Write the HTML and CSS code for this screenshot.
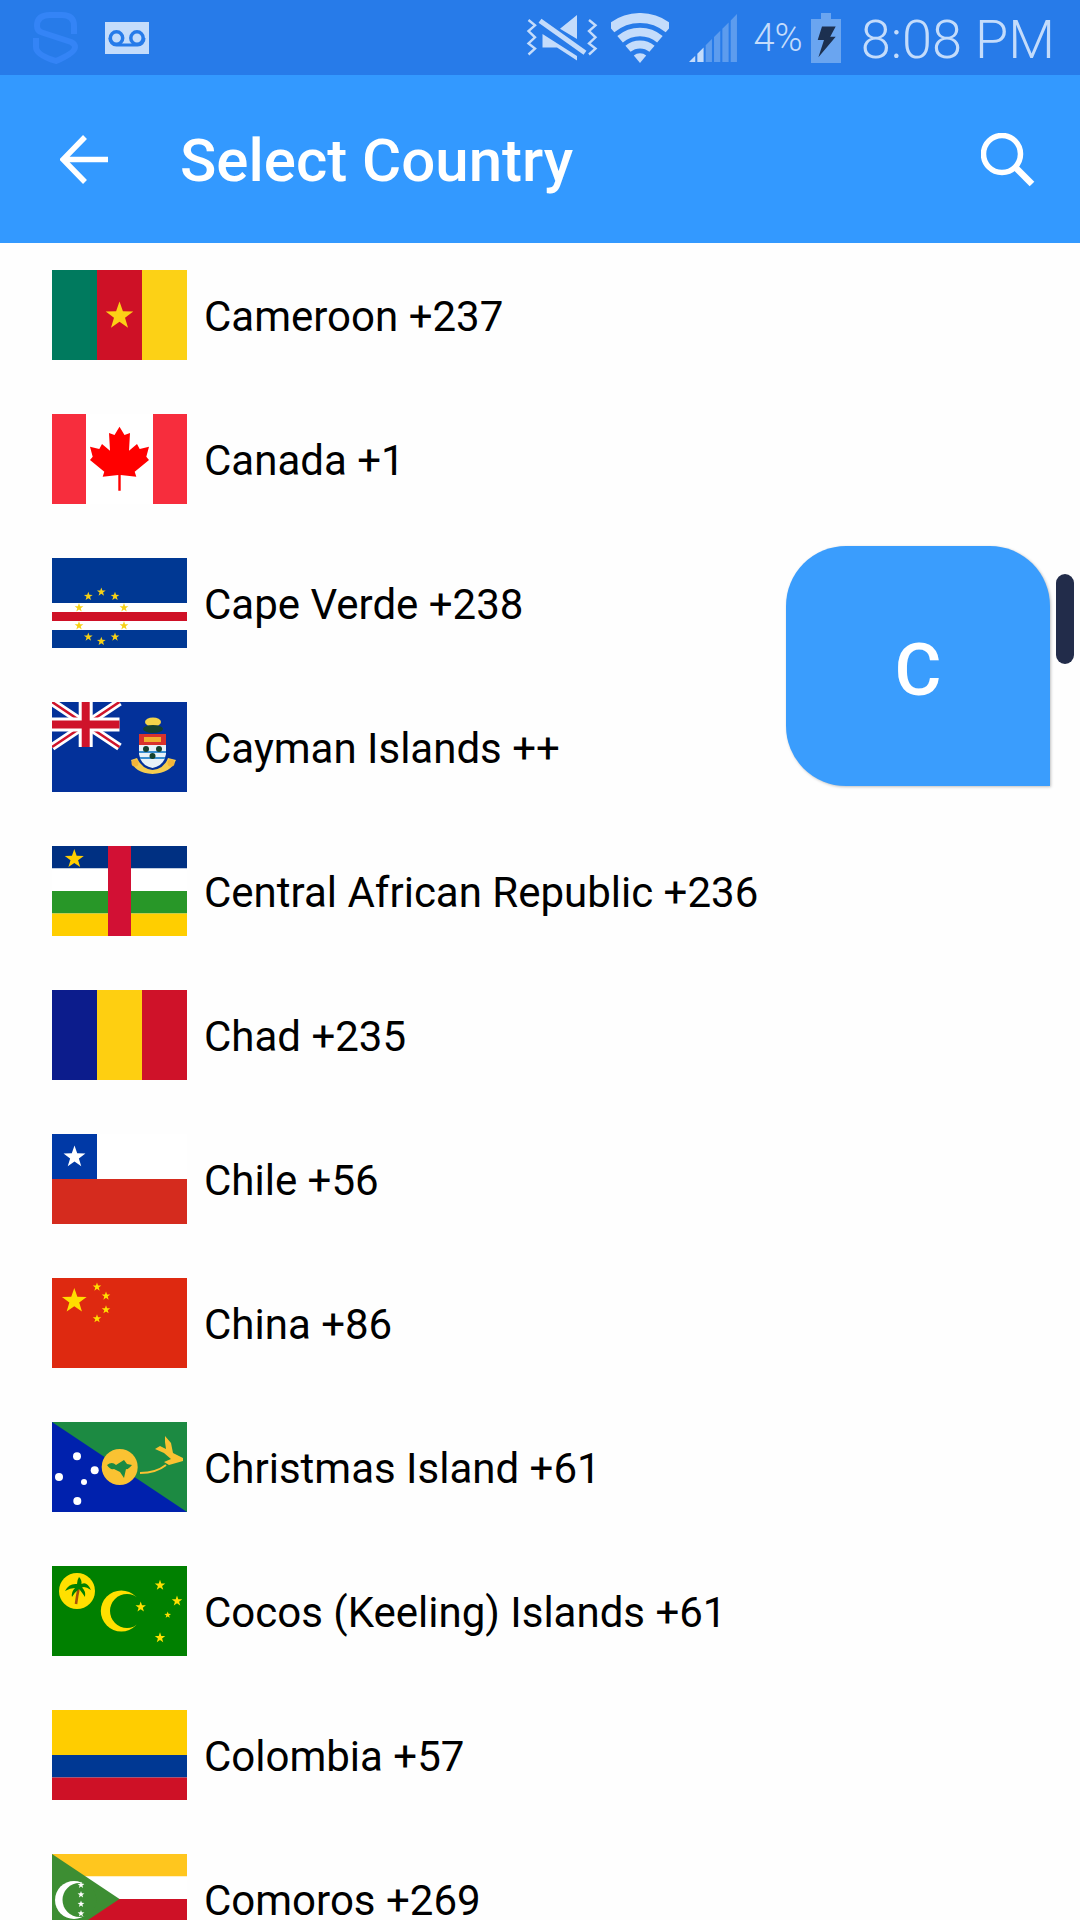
FILE: index.html
```html
<!DOCTYPE html>
<html lang="en">
<head>
<meta charset="utf-8">
<title>Select Country</title>
<link rel="stylesheet" href="styles.css">
</head>
<body>
<svg class="defs" aria-hidden="true"><defs><polygon id="star" points="0,-1 .235,-.324 .951,-.309 .38,.124 .588,.809 0,.4 -.588,.809 -.38,.124 -.951,-.309 -.235,-.324"/></defs></svg>
<div class="screen">
  <header class="status">
    <svg class="st-logo" width="46" height="52" viewBox="0 0 46 52"><path d="M41 22V14Q41 3 29 3H17Q4 3 4 14Q4 19 9 20.5L38 30Q42 32 42 35Q42 41 23 49Q3 43 3 35V26" fill="none" stroke="#3484f6" stroke-width="6"/></svg>
    <svg class="st-vm" width="44" height="32" viewBox="0 0 44 32"><rect width="44" height="32" fill="#c4dcfb"/><g fill="none" stroke="#277be9" stroke-width="3.5"><circle cx="11.5" cy="16" r="6.2"/><circle cx="32" cy="16" r="6.2"/></g><path d="M5 16a6.5 6.5 0 0 0 6.5 7H32a6.5 6.5 0 0 0 7-7" fill="none" stroke="#277be9" stroke-width="3"/></svg>
    <div class="st-right">
      <svg class="st-vib" width="72" height="46" viewBox="0 0 70 46"><g fill="none" stroke="#c4dcfb" stroke-width="2.4"><path d="M1.5 5 8 10.3 1.5 16 8 22.3 1.5 28.5 8 33.6 1.5 39.5"/><path d="M62 5 68.5 10.3 62 16 68.5 22.3 62 28.5 68.5 33.6 62 39.5"/><path d="M13 5.8 58 37.7" stroke-width="5"/></g><path fill="#c4dcfb" d="M50 0V24L33 13.7ZM15.5 18.9V32.6H30L50 45.6V41Z"/></svg>
      <svg class="st-wifi" width="58" height="50" viewBox="0 0 58 50"><g fill="none" stroke="#c4dcfb"><path stroke-width="10" d="M.1 15.5A45 45 0 0 1 57.9 15.5"/><path stroke-width="8.6" d="M9.1 26.3A31 31 0 0 1 48.9 26.3"/><path stroke-width="8" d="M17 35.8A18.6 18.6 0 0 1 41 35.8"/></g><path fill="#c4dcfb" d="M29 50 22.8 42.6A9.6 9.6 0 0 1 35.2 42.6Z"/></svg>
      <svg class="st-sig" width="49" height="49" viewBox="0 0 47 49" preserveAspectRatio="none"><path fill="#c4dcfb" d="M0 49 6 42.7V49ZM8 49V40.7L14 34.4V49Z"/><path fill="#5d9cee" d="M16 49V32.3L22 26V49ZM24 49V24L30 17.7V49ZM32 49V15.7L38 9.4V49ZM40 49V7.4L46 1V49Z"/></svg>
      <span class="st-pct">4%</span>
      <svg class="st-bat" width="30" height="50" viewBox="0 0 30 50"><path fill="#6aa5f0" d="M10 0H20V6H30V50H0V6H10Z"/><path fill="#1c3050" d="M11 13.4H24.7L19.2 23.7H24.7L7.4 44.2 13 27H6.7Z"/></svg>
      <span class="st-time">8:08 PM</span>
    </div>
  </header>
  <nav class="appbar">
    <svg class="ab-back" width="48" height="50" viewBox="0 0 48 50"><path d="M48 24.5H4M25 2 3 24.5 25 47" fill="none" stroke="#fff" stroke-width="5.5"/></svg>
    <h1 class="ab-title">Select Country</h1>
    <svg class="ab-search" width="54" height="54" viewBox="0 0 54 54"><circle cx="21" cy="21" r="18.5" fill="none" stroke="#fff" stroke-width="5.5"/><path d="M34 34 51 51" stroke="#fff" stroke-width="6.5"/></svg>
  </nav>
  <main class="list">
    <div class="row">
      <svg class="flag" viewBox="0 0 135 90"><rect width="45" height="90" fill="#007a5e"/><rect x="45" width="45" height="90" fill="#ce1126"/><rect x="90" width="45" height="90" fill="#fcd116"/><use href="#star" transform="translate(67.5 46) scale(14.5)" fill="#fcd116"/></svg>
      <span class="name">Cameroon +237</span>
    </div>
    <div class="row">
      <svg class="flag" viewBox="0 0 135 90"><rect width="135" height="90" fill="#fff"/><rect width="34" height="90" fill="#f72d3d"/><rect x="101" width="34" height="90" fill="#f72d3d"/><polygon fill="#f00" points="67.5,12.7 72.5,21 78,19 77,36.7 85,30 87.7,35 97,32.7 94.3,42.7 97,46 82.7,57.7 84.3,62.7 68.7,61 68.7,76.7 66.3,76.7 66.3,61 50.7,62.7 52.3,57.7 38,46 40.7,42.7 38,32.7 47.3,35 50,30 58,36.7 57,19 62.5,21"/></svg>
      <span class="name">Canada +1</span>
    </div>
    <div class="row">
      <svg class="flag" viewBox="0 0 135 90"><rect width="135" height="90" fill="#003893"/><rect y="45" width="135" height="27" fill="#fff"/><rect y="54" width="135" height="9" fill="#cf1126"/><g fill="#f7d116"><use href="#star" transform="translate(36.3 38.3) scale(4.6)"/><use href="#star" transform="translate(49.3 34) scale(4.6)"/><use href="#star" transform="translate(63 38.3) scale(4.6)"/><use href="#star" transform="translate(27 49.7) scale(4.6)"/><use href="#star" transform="translate(72 49.7) scale(4.6)"/><use href="#star" transform="translate(27 67.7) scale(4.6)"/><use href="#star" transform="translate(72 67.7) scale(4.6)"/><use href="#star" transform="translate(36.3 79) scale(4.6)"/><use href="#star" transform="translate(49.3 83.3) scale(4.6)"/><use href="#star" transform="translate(63 79) scale(4.6)"/></g></svg>
      <span class="name">Cape Verde +238</span>
    </div>
    <div class="row">
      <svg class="flag" viewBox="0 0 135 90"><rect width="135" height="90" fill="#03319a"/><path d="M0 0 67.5 45M67.5 0 0 45" stroke="#fff" stroke-width="8"/><path d="M0 0 67.5 45M67.5 0 0 45" stroke="#cf142b" stroke-width="2.6"/><path d="M33.7 0V45M0 22.5H67.5" stroke="#fff" stroke-width="14"/><path d="M33.7 0V45M0 22.5H67.5" stroke="#cf142b" stroke-width="8"/><ellipse cx="101" cy="20" rx="8" ry="4.5" fill="#f2d34a"/><ellipse cx="101" cy="27" rx="10" ry="4" fill="#14412e"/><rect x="87" y="32" width="27" height="11" fill="#d8322c"/><rect x="92" y="35" width="17" height="5" fill="#f0b030"/><path d="M87 43H114V52Q112 64 100.500 66Q89 64 87 52Z" fill="#e8f2f8"/><path d="M87 50H114M88 56H113" stroke="#3b8fd0" stroke-width="2"/><circle cx="94" cy="47" r="3" fill="#14412e"/><circle cx="107" cy="47" r="3" fill="#14412e"/><circle cx="100.500" cy="54" r="3" fill="#14412e"/><path d="M79 58Q82 71 100.500 72Q119 71 124 58L116 56Q112 67 100.500 68Q90 67 85 56Z" fill="#f4cc50"/><circle cx="83" cy="61" r="3.500" fill="#f3b53a"/><circle cx="119" cy="61" r="3.500" fill="#f3b53a"/></svg>
      <span class="name">Cayman Islands ++</span>
    </div>
    <div class="row">
      <svg class="flag" viewBox="0 0 135 90"><rect width="135" height="22.500" fill="#003082"/><rect y="22.500" width="135" height="22.500" fill="#fff"/><rect y="45" width="135" height="22.500" fill="#289728"/><rect y="67.500" width="135" height="22.500" fill="#ffce00"/><rect x="56" width="23" height="90" fill="#d21034"/><use href="#star" transform="translate(22.300 13) scale(10)" fill="#ffce00"/></svg>
      <span class="name">Central African Republic +236</span>
    </div>
    <div class="row">
      <svg class="flag" viewBox="0 0 135 90"><rect width="45" height="90" fill="#0c1c8c"/><rect x="45" width="45" height="90" fill="#fecf11"/><rect x="90" width="45" height="90" fill="#cf1229"/></svg>
      <span class="name">Chad +235</span>
    </div>
    <div class="row">
      <svg class="flag" viewBox="0 0 135 90"><rect width="135" height="45" fill="#fff"/><rect width="45" height="45" fill="#0039a6"/><rect y="45" width="135" height="45" fill="#d52b1e"/><use href="#star" transform="translate(22.500 23) scale(11.500)" fill="#fff"/></svg>
      <span class="name">Chile +56</span>
    </div>
    <div class="row">
      <svg class="flag" viewBox="0 0 135 90"><rect width="135" height="90" fill="#de2910"/><g fill="#ffde00"><use href="#star" transform="translate(22.300 23) scale(13)"/><use href="#star" transform="translate(45 9) scale(4.500)"/><use href="#star" transform="translate(54 18) scale(4.500)"/><use href="#star" transform="translate(54 31.700) scale(4.500)"/><use href="#star" transform="translate(45 40.700) scale(4.500)"/></g></svg>
      <span class="name">China +86</span>
    </div>
    <div class="row">
      <svg class="flag" viewBox="0 0 135 90"><rect width="135" height="90" fill="#1c8a42"/><polygon points="0,0 135,90 0,90" fill="#0021ad"/><circle cx="67.700" cy="45" r="18" fill="#fac232"/><path d="M55 43Q60 39 64 43L72 38 75 42 80 43Q76 48 74 47L72 56 68 50 62 47Q58 48 55 43Z" fill="#1c8a42"/><g fill="#fff"><circle cx="25" cy="34.300" r="4"/><circle cx="7" cy="55" r="4"/><circle cx="42.700" cy="48.300" r="4"/><circle cx="32" cy="60" r="3"/><circle cx="25.300" cy="79" r="4"/></g><path d="M88 51Q104 51 114 43" fill="none" stroke="#fac232" stroke-width="2"/><path d="M113 14 119 21 121 31 131 36 131 39 117 43 112 40 119 37 112 31 103 27 108 24 114 27 113 20Z" fill="#fac232"/></svg>
      <span class="name">Christmas Island +61</span>
    </div>
    <div class="row">
      <svg class="flag" viewBox="0 0 135 90"><rect width="135" height="90" fill="#008000"/><circle cx="25" cy="25" r="18" fill="#ffe000"/><path d="M24 38Q25 30 26.500 23" fill="none" stroke="#a8500a" stroke-width="2.600"/><path d="M27 11Q30 14 29.500 18Q35 15 39 24Q33 20 30 21.500Q34 25 33 31Q29 25 27 23Q23 26 20 31Q19 26 23 22Q18 22 13 25Q17 17 25 18Q25 14 27 11Z" fill="#008000"/><circle cx="69.300" cy="45" r="20.500" fill="#ffe000"/><circle cx="75" cy="45" r="17" fill="#008000"/><g fill="#ffe000"><use href="#star" transform="translate(108 19.300) scale(5.500)"/><use href="#star" transform="translate(125 35) scale(5.500)"/><use href="#star" transform="translate(88.700 41) scale(5.500)"/><use href="#star" transform="translate(115.700 49) scale(3.500)"/><use href="#star" transform="translate(108 71.700) scale(5.500)"/></g></svg>
      <span class="name">Cocos (Keeling) Islands +61</span>
    </div>
    <div class="row">
      <svg class="flag" viewBox="0 0 135 90"><rect width="135" height="45" fill="#ffcd00"/><rect y="45" width="135" height="22.500" fill="#003893"/><rect y="67.500" width="135" height="22.500" fill="#ce1126"/></svg>
      <span class="name">Colombia +57</span>
    </div>
    <div class="row">
      <svg class="flag" viewBox="0 0 135 90"><rect width="135" height="22.500" fill="#ffc61e"/><rect y="22.500" width="135" height="22.500" fill="#fff"/><rect y="45" width="135" height="22.500" fill="#ce1126"/><rect y="67.500" width="135" height="22.500" fill="#3a75c4"/><polygon points="0,0 67.500,45 0,90" fill="#3d8e33"/><circle cx="22" cy="46" r="19" fill="#fff"/><circle cx="27.500" cy="46" r="17" fill="#3d8e33"/><g fill="#fff"><use href="#star" transform="translate(29 31) scale(3.600)"/><use href="#star" transform="translate(29 40.500) scale(3.600)"/><use href="#star" transform="translate(29 50) scale(3.600)"/><use href="#star" transform="translate(29 59.500) scale(3.600)"/></g></svg>
      <span class="name">Comoros +269</span>
    </div>
  </main>
  <div class="bubble">C</div>
  <div class="thumb"></div>
</div>
</body>
</html>
```
FILE: styles.css
```css
* { box-sizing: border-box; }
html, body { margin: 0; padding: 0; }
body { width: 1080px; height: 1920px; overflow: hidden; background: #fefefe; font-family: Roboto, "Liberation Sans", sans-serif; }
.defs { display: none; }
.screen { position: relative; width: 1080px; height: 1920px; overflow: hidden; }

.status { display: flex; align-items: center; height: 75px; padding-left: 33px; padding-right: 25px; background: #277be9; }
.st-vm { margin-left: 26px; }
.st-right { display: flex; align-items: center; margin-left: auto; color: #c4dcfb; }
.st-vib { margin-right: 13px; }
.st-wifi { margin-right: 20px; }
.st-sig { margin-right: 16px; }
.st-pct { font-size: 38px; font-weight: 300; margin-right: 8px; }
.st-bat { margin-right: 20px; }
.st-time { padding-top: 4px; font-size: 54px; font-weight: 300; line-height: 1; }

.appbar { display: flex; align-items: center; height: 168px; padding-top: 2px; padding-left: 60px; padding-right: 45px; background: #3399ff; }
.ab-title { margin: 0 0 0 72px; font-size: 60px; font-weight: 500; color: #fff; }
.ab-search { margin-left: auto; }

.row { display: flex; align-items: center; gap: 17px; height: 144px; padding-left: 52px; }
.flag { display: block; flex: none; width: 135px; height: 90px; filter: blur(.7px); }
.name { padding-top: 2px; font-size: 42px; color: #000; white-space: nowrap; }

.bubble { position: absolute; left: 786px; top: 546px; display: flex; align-items: center; justify-content: center; width: 264px; height: 240px; padding-top: 8px; border-radius: 60px 60px 0 60px; background: #3a9dfd; box-shadow: 1px 1px 3px rgba(0,0,0,.25); color: #fff; font-size: 72px; font-weight: 500; }
.thumb { position: absolute; left: 1056px; top: 574px; width: 18px; height: 90px; border-radius: 9px; background: #222c4a; }
```
